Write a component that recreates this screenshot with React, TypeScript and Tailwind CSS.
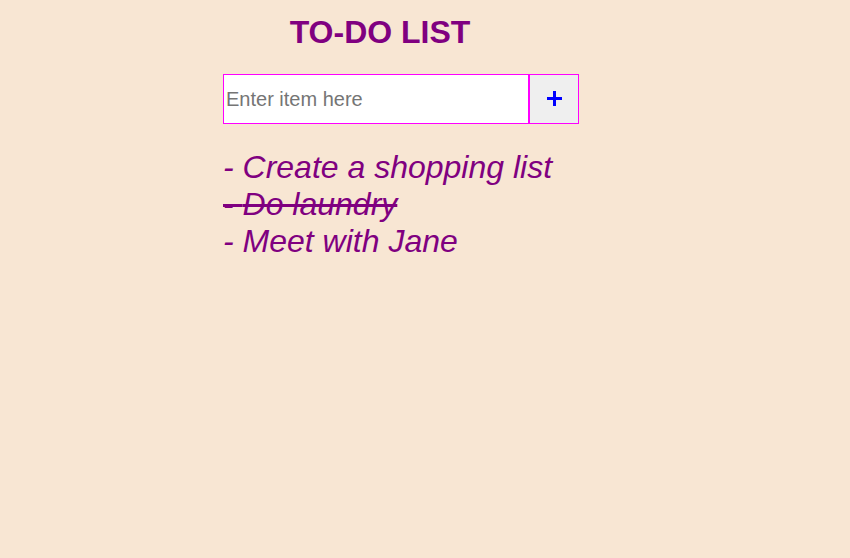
import React, { useState } from 'react';

interface Todo {
  id: number;
  text: string;
  done: boolean;
}

export default function App() {
  const [items, setItems] = useState<Todo[]>([
    { id: 1, text: 'Create a shopping list', done: false },
    { id: 2, text: 'Do laundry', done: true },
    { id: 3, text: 'Meet with Jane', done: false },
  ]);
  const [draft, setDraft] = useState('');

  const addItem = () => {
    if (!draft.trim()) return;
    setItems([...items, { id: Date.now(), text: draft.trim(), done: false }]);
    setDraft('');
  };

  const toggle = (id: number) =>
    setItems(items.map((t) => (t.id === id ? { ...t, done: !t.done } : t)));

  return (
    <div className="min-h-[558px] w-full bg-[#f8e6d3] pl-[223px] pt-[14px] font-['Liberation_Sans',Arial,sans-serif]">
      <h1 className="w-[314px] text-center text-[32px] leading-[37px] font-bold text-[#800080]">
        TO-DO LIST
      </h1>

      {/* Input row */}
      <div className="mt-[23px] flex h-[50px] w-[356px]">
        <input
          value={draft}
          onChange={(e) => setDraft(e.target.value)}
          onKeyDown={(e) => e.key === 'Enter' && addItem()}
          placeholder="Enter item here"
          className="h-[50px] w-[306px] border border-[#ff00ff] bg-white px-[2px] text-[20px] text-black outline-none placeholder:text-[#757575]"
        />
        <button
          onClick={addItem}
          aria-label="Add item"
          className="flex h-[50px] w-[50px] items-center justify-center border border-[#ff00ff] bg-[#efefef] pb-[2px]"
        >
          <svg width="15" height="15" viewBox="0 0 15 15" className="block">
            <path d="M7.5 0V15M0 7.5H15" stroke="#0000ff" strokeWidth="3" />
          </svg>
        </button>
      </div>

      {/* Items */}
      <ul className="mt-[25px] text-[32px] leading-[37px] text-[#800080] italic">
        {items.map((t) => (
          <li
            key={t.id}
            onClick={() => toggle(t.id)}
            className={`cursor-pointer ${t.done ? 'line-through' : ''}`}
          >
            - {t.text}
          </li>
        ))}
      </ul>
    </div>
  );
}
